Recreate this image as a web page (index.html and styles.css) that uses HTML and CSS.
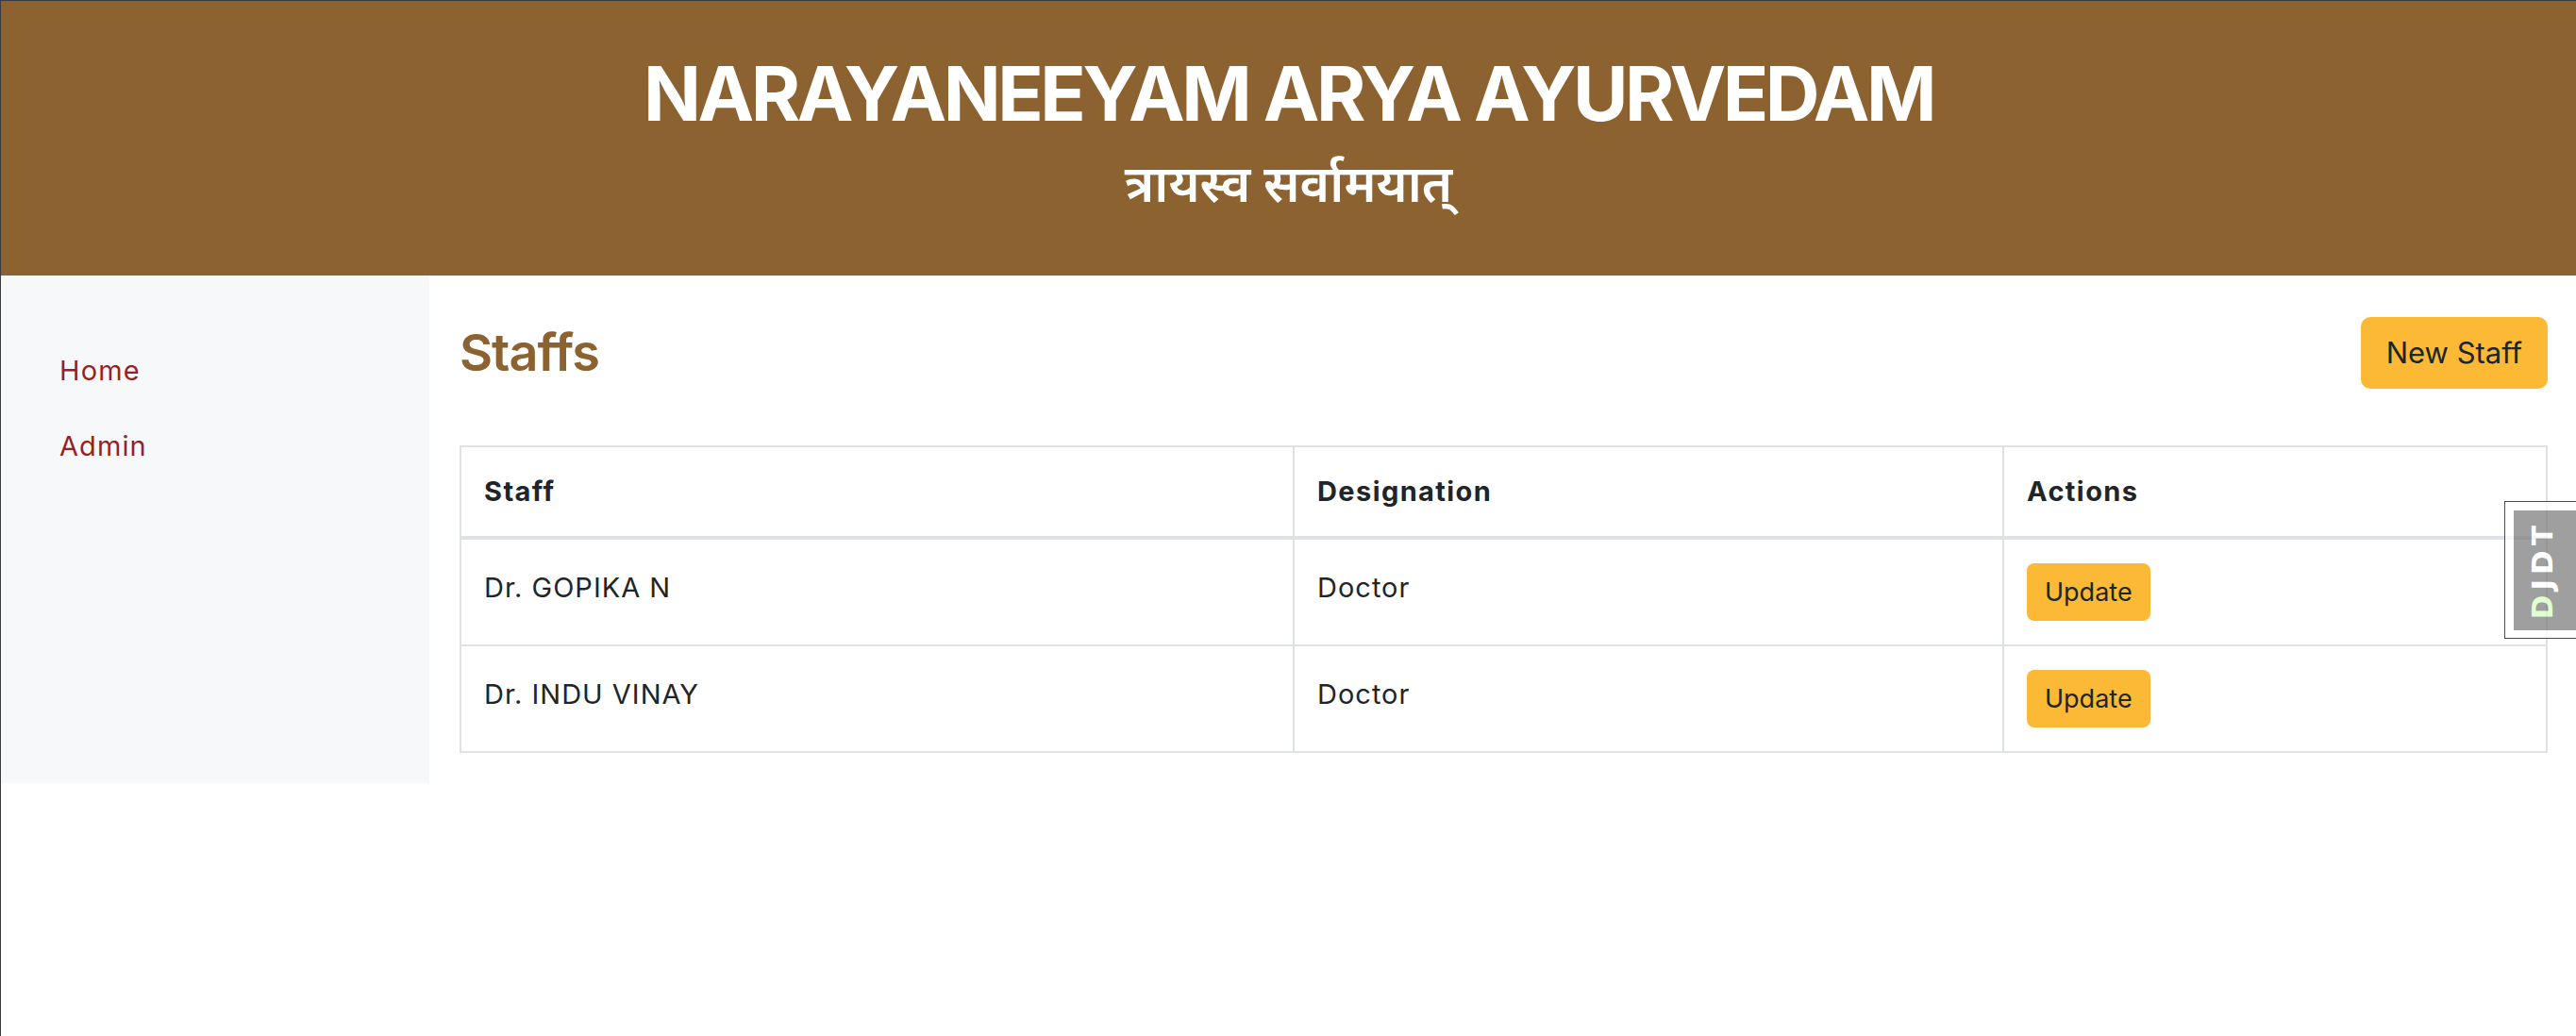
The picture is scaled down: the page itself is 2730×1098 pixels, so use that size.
FILE: index.html
```html
<!DOCTYPE html>
<html lang="en">
<head>
<meta charset="utf-8">
<title>Staffs - Narayaneeyam Arya Ayurvedam</title>
<link rel="stylesheet" href="styles.css">
</head>
<body>
<header class="site-header">
  <h1 class="brand">NARAYANEEYAM ARYA AYURVEDAM</h1>
  <p class="motto" lang="sa">त्रायस्व सर्वामयात्</p>
</header>
<div class="layout">
  <nav class="sidebar">
    <a class="side-link" href="#">Home</a>
    <a class="side-link" href="#">Admin</a>
  </nav>
  <main class="content">
    <div class="page-head">
      <h2 class="page-title">Staffs</h2>
      <a class="btn btn-new" href="#">New Staff</a>
    </div>
    <table class="staff-table">
      <thead>
        <tr>
          <th class="col-staff">Staff</th>
          <th class="col-desig">Designation</th>
          <th class="col-actions">Actions</th>
        </tr>
      </thead>
      <tbody>
        <tr>
          <td>Dr. GOPIKA N</td>
          <td>Doctor</td>
          <td class="cell-action"><a class="btn btn-update" href="#">Update</a></td>
        </tr>
        <tr>
          <td>Dr. INDU VINAY</td>
          <td>Doctor</td>
          <td class="cell-action"><a class="btn btn-update" href="#">Update</a></td>
        </tr>
      </tbody>
    </table>
  </main>
</div>
<div class="djdt-handle">
  <div class="djdt-button"><span class="djdt-text"><span class="djdt-d">D</span><span class="djdt-j">J</span>DT</span></div>
</div>
</body>
</html>
```

FILE: styles.css
```css
* { box-sizing: border-box; }

html, body { height: 100%; }

body {
  margin: 0;
  border-left: 1px solid #3a3b3e;
  border-top: 1px solid #3a3b3e;
  font-family: Inter, "Noto Sans", "Liberation Sans", sans-serif;
  font-size: 29px;
  line-height: 1.5;
  color: #212529;
  background: #fff;
  position: relative;
}

.site-header {
  height: 291px;
  background: #8b6230;
  color: #fff;
  text-align: center;
  padding-top: 58px;
}

.brand {
  margin: 0;
  font-size: 80px;
  line-height: 80px;
  font-weight: 700;
  letter-spacing: -3.5px;
}

.motto {
  margin: 21px 0 0;
  font-size: 54px;
  line-height: 70px;
  font-weight: 600;
}

.layout {
  display: flex;
  align-items: stretch;
}

.sidebar {
  width: 454px;
  flex: none;
  background: #f7f8fa;
  padding: 61px 0 0 62px;
  display: flex;
  flex-direction: column;
  align-items: flex-start;
}

.side-link {
  display: block;
  color: #9a1f22;
  text-decoration: none;
  font-size: 29px;
  letter-spacing: 1.1px;
  line-height: 42px;
  padding: 19px 0;
}

.content {
  flex: 1;
  padding: 44px 30px 32px 32px;
}

.page-head {
  display: flex;
  align-items: center;
  justify-content: space-between;
  height: 76px;
}

.page-title {
  margin: 0;
  font-size: 54px;
  font-weight: 600;
  line-height: 1.2;
  color: #8b6230;
  letter-spacing: -1px;
}

.btn {
  display: inline-block;
  background: #fbb935;
  color: #212529;
  text-decoration: none;
  white-space: nowrap;
  letter-spacing: 0;
}

.btn-new {
  font-size: 31px;
  line-height: 48px;
  padding: 14px 27px;
  border-radius: 10px;
}

.btn-update {
  font-size: 27px;
  line-height: 41px;
  padding: 10px 19px;
  border-radius: 8px;
}

.staff-table {
  margin-top: 60px;
  width: 100%;
  border-collapse: collapse;
  border: 2px solid #dee2e6;
  letter-spacing: 1px;
}

.staff-table th,
.staff-table td {
  border: 2px solid #dee2e6;
  text-align: left;
  vertical-align: top;
  line-height: 42px;
  padding: 30px 24px 20px;
}

.staff-table th {
  font-weight: 700;
  letter-spacing: 1.4px;
  padding: 26px 24px 26px;
}

.staff-table thead th {
  border-bottom: 4px solid #dee2e6;
}

.staff-table .cell-action {
  padding: 25px 24px 25px;
}

.col-staff { width: 883px; }
.col-desig { width: 752px; }

.djdt-handle {
  position: absolute;
  top: 530px;
  right: 0;
  width: 76px;
  height: 146px;
  background: #fff;
  border: 1px solid #111;
  border-right: none;
  opacity: 0.75;
  padding: 9px 0 8px 9px;
}

.djdt-button {
  width: 100%;
  height: 100%;
  background: rgba(0, 0, 0, 0.5);
  display: flex;
  align-items: center;
  justify-content: center;
  padding-right: 6px;
}

.djdt-text {
  writing-mode: vertical-rl;
  transform: rotate(180deg);
  font-family: "DejaVu Sans", sans-serif;
  font-weight: 700;
  font-size: 31px;
  line-height: 32px;
  color: #fff;
  letter-spacing: 5px;
}

.djdt-d { color: #d9ffc4; }
.djdt-j { color: #fff; }
```
